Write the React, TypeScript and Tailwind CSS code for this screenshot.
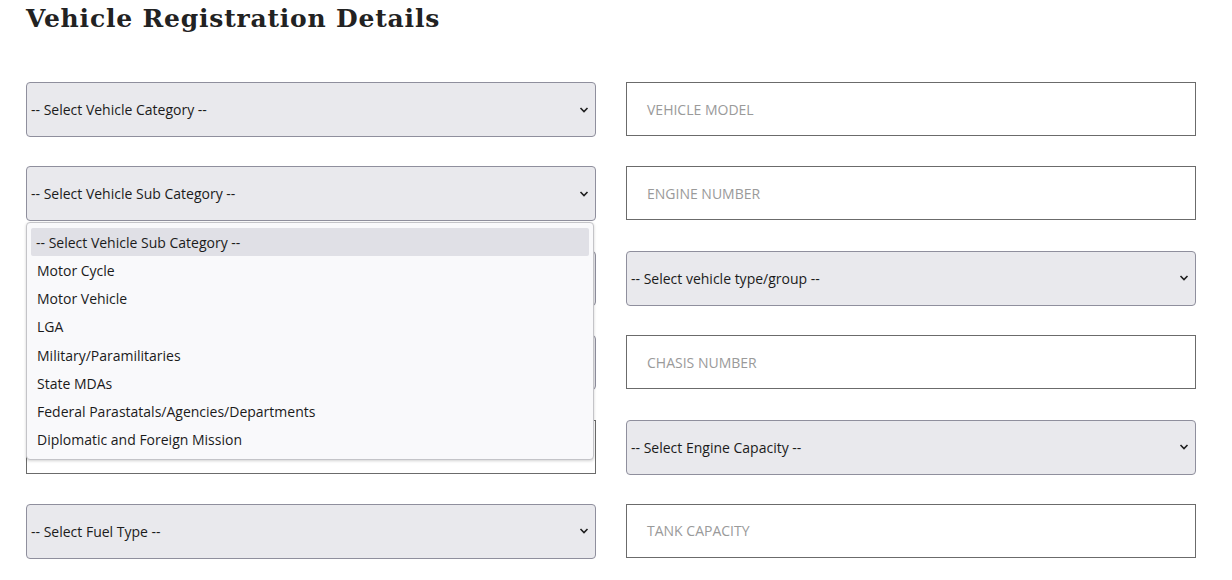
import React from "react";

// hidden rows (3-5 on the left) sit under the open dropdown, so they carry no label
const fields = [
  { kind: "select", label: "-- Select Vehicle Category --" },
  { kind: "input", label: "VEHICLE MODEL" },
  { kind: "select", label: "-- Select Vehicle Sub Category --" },
  { kind: "input", label: "ENGINE NUMBER" },
  { kind: "select", label: "" },
  { kind: "select", label: "-- Select vehicle type/group --" },
  { kind: "select", label: "" },
  { kind: "input", label: "CHASIS NUMBER" },
  { kind: "input", label: "" },
  { kind: "select", label: "-- Select Engine Capacity --" },
  { kind: "select", label: "-- Select Fuel Type --" },
  { kind: "input", label: "TANK CAPACITY" },
];

const subCategories = [
  "-- Select Vehicle Sub Category --",
  "Motor Cycle",
  "Motor Vehicle",
  "LGA",
  "Military/Paramilitaries",
  "State MDAs",
  "Federal Parastatals/Agencies/Departments",
  "Diplomatic and Foreign Mission",
];

function Chevron() {
  return (
    <svg width="10" height="6" viewBox="0 0 10 6" className="shrink-0">
      <path d="M1.5 1 L5 4.5 L8.5 1" fill="none" stroke="#1f1f1f" strokeWidth="1.6" />
    </svg>
  );
}

function Field({ kind, label }: { kind: string; label: string }) {
  if (kind === "select") {
    return (
      <div className="flex h-[55px] items-center justify-between rounded-[4px] border border-[#8f8f9d] bg-[#e9e9ed] pl-[4px] pr-[6px] text-[14px] text-[#1b1b1b]">
        <span>{label}</span>
        <Chevron />
      </div>
    );
  }
  return (
    <div className="flex h-[54px] items-center border border-[#6b6b6b] bg-white pl-[20px] text-[14px] text-[#9a9a9a]">
      {label}
    </div>
  );
}

export default function App() {
  return (
    <div
      className="min-h-[580px] bg-white pl-[26px] pr-[36px]"
      style={{ fontFamily: '"Open Sans", "Liberation Sans", sans-serif' }}
    >
      <h1
        className="pt-[3px] text-[25px] font-bold leading-[32px] tracking-[0.8px] text-[#222222]"
        style={{ fontFamily: '"DejaVu Serif", "Liberation Serif", serif' }}
      >
        Vehicle Registration Details
      </h1>

      <div className="relative mt-[47px] grid grid-cols-2 auto-rows-[55px] gap-x-[30px] gap-y-[29.4px]">
        {fields.map((f, i) => (
          <Field key={i} kind={f.kind} label={f.label} />
        ))}

        {/* open dropdown of sub category */}
        <div className="absolute left-0 top-[140px] w-[568px] rounded-[4px] border border-[#c4c4c8] bg-[#f9f9fb] px-[4px] py-[5px] text-[14px] text-[#1b1b1b] shadow-[0_1px_3px_rgba(0,0,0,0.18)]">
          {subCategories.map((o, i) => (
            <div
              key={o}
              className={
                "flex h-[28.25px] items-center rounded-[2px] " +
                (i === 0 ? "bg-[#e0e0e6] pl-[5px]" : "pl-[6px]")
              }
            >
              {o}
            </div>
          ))}
        </div>
      </div>
    </div>
  );
}
